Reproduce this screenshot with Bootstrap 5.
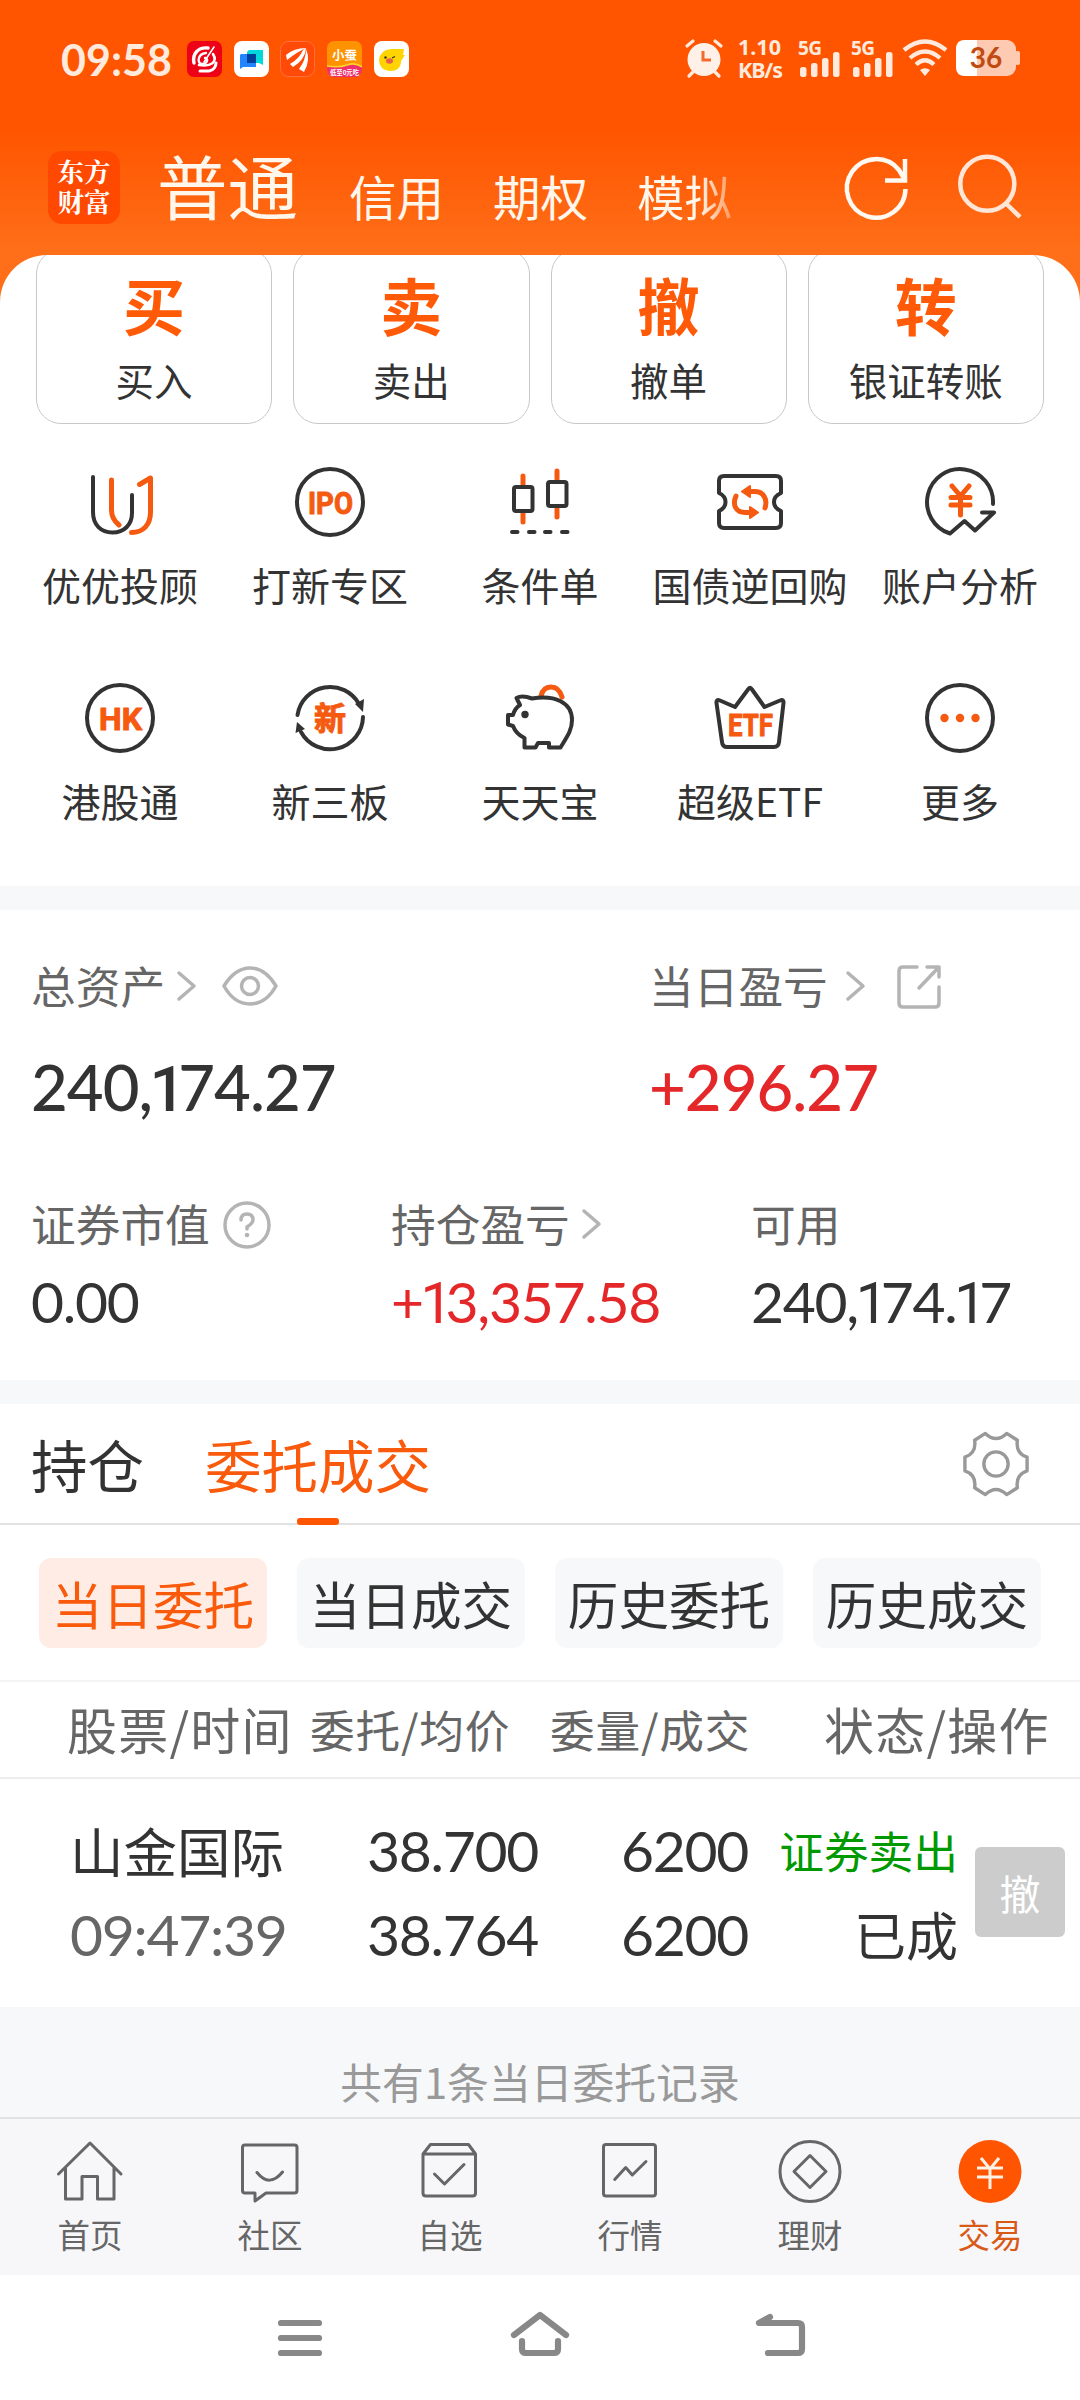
<!DOCTYPE html>
<html lang="zh-CN">
<head>
<meta charset="utf-8">
<meta name="viewport" content="width=device-width, initial-scale=1">
<title>东方财富 交易</title>
<link href="https://cdn.jsdelivr.net/npm/bootstrap@5.3.0/dist/css/bootstrap.min.css" rel="stylesheet">
<style>
body{font-family:"Noto Sans CJK SC",sans-serif;color:#333;background:#fff;width:1080px;height:2400px;overflow:hidden;line-height:1}
svg{display:block;flex:none;overflow:visible}
.num{font-family:Lato,sans-serif;white-space:nowrap}
.num i{font-family:Roboto,sans-serif;font-style:normal;margin:0 -.1em 0 -.04em}
.hero{height:302px;background:linear-gradient(#f50 0,#f50 130px,#ff6e18 250px)}
.statusbar{height:118px;padding:0 60px 0 61px}
.clock{font-size:43px;font-weight:700;color:#ffeadd;width:126px}
.appicons{gap:11.7px}
.speed{font-family:"Noto Sans",sans-serif;font-weight:700;font-size:21.5px;line-height:23px;color:#ffeadd}
.topnav{height:136px;color:#fff7ec;padding-left:48px}
.logo{width:72px;height:73px;border-radius:14px;background:#ff4800;color:#fff;font-weight:700;font-size:26.5px;line-height:30px;margin-top:33px;padding-top:5px;text-align:center;white-space:nowrap;font-family:"Noto Serif CJK SC","Noto Sans CJK SC",serif}
.acc{font-size:47.5px;line-height:60px;margin-top:48px;white-space:nowrap}
.acc-on{font-size:70.5px;line-height:80px;margin:26px 0 0 37px}
.fadeout{background:linear-gradient(90deg,#fff7ec 66%,rgba(255,247,236,.35));-webkit-background-clip:text;background-clip:text;color:transparent}
.sheet{margin-top:-47px;height:631px;border-radius:47px 47px 0 0;background:#fff;overflow:hidden}
.quick{padding:0 36px;gap:21px;margin-top:-6px}
.quick-card{height:175px;flex:1 1 0;border:1px solid #c8c8c8;border-radius:25px;text-align:center}
.quick-big{font-size:62px;line-height:62px;font-weight:700;color:#ff5a08;margin-top:23px}
.quick-label{font-size:38.5px;line-height:44px;margin-top:22px}
.services{padding:38px 15px 0}
.svc{width:210px;height:216px;text-align:center}
.svc-label{font-size:39px;line-height:46px;white-space:nowrap;margin-top:19px}
.band{height:24px;background:#f7f8fa}
.assets{height:470px;padding-left:31px}
.lab{font-size:44.7px;line-height:60px;color:#666;white-space:nowrap}
.big{font-size:63.5px;line-height:70px;letter-spacing:-1px;margin-top:37px}
.mid{font-size:57px;line-height:64px;letter-spacing:-1.3px;margin-top:16px}
.up{color:#e4282a}
.orange{color:#f95a0c}
.tabs{height:121px;border-bottom:2px solid #e2e2e2;padding:0 50px 0 31px}
.tab-t{font-size:56.5px;line-height:121px}
.tab-on{position:relative}
.tab-on::after{content:"";position:absolute;left:92px;bottom:-1px;width:42px;height:7px;border-radius:3px;background:#f50}
.pills{height:157px;padding:33px 39px 0;gap:30px;border-bottom:2px solid #f4f4f5}
.pill{flex:1 1 0;height:90px;border-radius:12px;background:#f7f8fa;font-size:50.6px;line-height:90px;text-align:center;white-space:nowrap}
.pill-on{background:#ffede5;color:#f95a0c}
.thead-row{height:97px;border-bottom:2px solid #ededed;color:#666;white-space:nowrap;line-height:93px;letter-spacing:.8px}
.thead-row .f50{letter-spacing:1.2px}
.f50{font-size:50px}.f45{font-size:44.7px}
.order{height:228px;padding-top:39px}
.order-line{line-height:64px;height:84px;white-space:nowrap}
.order .num{letter-spacing:-1.3px;font-size:57px}
.cancel{width:90px;height:90px;border-radius:6px;background:#ccc;color:#fff;font-size:41px;line-height:90px;text-align:center}
.foot{height:110px;background:#f7f8fa;color:#999;font-size:41.8px;line-height:148px;text-align:center}
.tabbar{height:158px;background:#f7f7fa;border-top:2px solid #e3e3e5;color:#666}
.tabbar>div{width:180px;padding-top:18px;text-align:center;font-size:32.5px;line-height:40px}
.tabbar svg{margin:0 auto 7px}
.ln{fill:none;stroke:#333;stroke-width:4;stroke-linecap:round;stroke-linejoin:round}
.og{fill:none;stroke:#f55a10;stroke-width:5;stroke-linecap:round;stroke-linejoin:round}
.gl{fill:none;stroke:#b4b4b4;stroke-width:3.5;stroke-linecap:round;stroke-linejoin:round}
.tl{fill:none;stroke:#666;stroke-width:3;stroke-linecap:round;stroke-linejoin:round}
.nl{fill:none;stroke:#888;stroke-width:6.2;stroke-linecap:round;stroke-linejoin:round}
.it{font-family:Roboto,sans-serif;font-weight:700;fill:#f55a10;stroke:#f55a10;stroke-width:1;stroke-linejoin:round}
</style>
<script src="https://cdn.jsdelivr.net/npm/bootstrap@5.3.0/dist/js/bootstrap.bundle.min.js"></script>
</head>
<body>
<header class="hero">
  <div class="statusbar d-flex align-items-center">
    <div class="clock num">09:58</div>
    <div class="appicons d-flex">
      <svg width="35" height="36" viewBox="0 0 35 36"><rect width="35" height="36" rx="7" fill="#ee0016"/><g fill="none" stroke="#fff" stroke-linecap="round"><path d="M21 7C11 6 5 13 7 22" stroke-width="3.4"/><path d="M27 6L17 21" stroke-width="1.6"/><path d="M19 12C10 13 10 23 15 23S22 18 18 17" stroke-width="2.4"/><path d="M26 13C31 21 24 26 12 24" stroke-width="2.6"/><path d="M13 30H22C27 29 29 25 29 22" stroke-width="3"/></g></svg>
      <svg width="35" height="36" viewBox="0 0 35 36"><rect width="35" height="36" rx="8" fill="#fff"/><path d="M15 9H29V24L25 22H13V11Z" fill="#00d8dc"/><path d="M7 13H22V26H9L6 28V14Z" fill="#2185ff"/><path d="M13 13H22V22H13Z" fill="#004099"/></svg>
      <svg width="35" height="36" viewBox="0 0 35 36"><rect x=".5" y=".5" width="34" height="35" rx="8" fill="#ff4a08" stroke="#ff713c"/><path d="M6 14Q14 7 26 7Q17 11 7 19ZM10 23Q19 18 23 9L26 7Q25 19 13 26ZM19 28Q26 19 26 8Q31 19 24 31Z" fill="#fff"/></svg>
      <svg width="35" height="36" viewBox="0 0 35 36"><defs><clipPath id="rc"><rect width="35" height="36" rx="7"/></clipPath></defs><g clip-path="url(#rc)"><rect width="35" height="36" fill="#ff9200"/><path d="M0 25Q12 27 20 24T35 26V36H0Z" fill="#f0306c"/><path d="M0 25Q12 27 20 24T35 26" fill="none" stroke="#ffd52a" stroke-width="1.5"/></g><text x="17.500" y="19" font-size="12.500" font-weight="700" text-anchor="middle" fill="#fff">小蚕</text><text x="17.500" y="34" font-size="6.300" font-weight="700" text-anchor="middle" fill="#fff">低至0元吃</text></svg>
      <svg width="35" height="36" viewBox="0 0 35 36"><rect width="35" height="36" rx="8" fill="#fff"/><path d="M17 8Q24 8 30 8L29 14L31 14L27 20Q27 30 16 30Q5 29 5 19Q6 9 17 8Z" fill="#ffd400"/><ellipse cx="15.500" cy="20" rx="3.500" ry="2.800" fill="#e8604c"/><circle cx="11.500" cy="16.500" r="1.200" fill="#333"/><path d="M18 17L21 15.500" stroke="#333" stroke-width="1.200"/></svg>
    </div>
    <div class="d-flex ms-auto align-items-center">
      <svg width="38" height="40" viewBox="1 1 38 40" fill="none" stroke="#ffeadd" stroke-linecap="round"><circle cx="19" cy="21.500" r="16.500" fill="#fff0e8" stroke="none"/><path d="M2 8L8 3M30 3L36 8" stroke-width="3.200"/><path d="M8 34L4 38M30 34L34 38" stroke-width="3.200"/><path d="M18 13V22H26" stroke="#f26a2e" stroke-width="3" stroke-linecap="butt"/></svg>
      <div class="speed" style="margin:-2px 0 0 14px;width:60px">1.10<br><span style="letter-spacing:-1.1px">KB/s</span></div>
      <svg width="97" height="40" viewBox="0 1 97 40" fill="#ffeadd" font-family="Noto Sans" font-weight="700" font-size="19"><text x="0" y="17" textLength="24">5G</text><rect x="2" y="29" width="6.500" height="10" rx="2.500"/><rect x="13" y="25" width="6.500" height="14" rx="2.500"/><rect x="24" y="20" width="6.500" height="19" rx="2.500"/><rect x="35" y="14" width="6.500" height="25" rx="2.500"/><text x="53" y="17" textLength="24">5G</text><rect x="55" y="29" width="6.500" height="10" rx="2.500"/><rect x="66" y="25" width="6.500" height="14" rx="2.500"/><rect x="77" y="20" width="6.500" height="19" rx="2.500"/><rect x="88" y="14" width="6.500" height="25" rx="2.500"/></svg>
      <svg width="46" height="40" viewBox="0 1 46 40" style="margin-left:7px" fill="none" stroke="#ffeadd" stroke-width="4.200"><path d="M2 12Q23-5 44 12"/><path d="M8 20Q23 7 38 20"/><path d="M14 26.500Q23 18 32 26.500"/><path d="M18 32Q23 28.500 28 32L23 38Z" fill="#ffeadd" stroke="none"/></svg>
      <svg width="64" height="36" viewBox="0 0 64 36" style="margin:-2px 0 0 8px"><rect width="60" height="36" rx="9" fill="#ffcab2"/><path d="M9 0H21V36H9Q0 36 0 27V9Q0 0 9 0Z" fill="#fff"/><rect x="59" y="11" width="5" height="14" rx="2" fill="#ffcab2"/><text x="30" y="28" font-family="Lato" font-size="28" font-weight="700" text-anchor="middle" fill="#c04a12">36</text></svg>
    </div>
  </div>
  <div class="topnav d-flex align-items-start">
    <div class="logo">东方<br>财富</div>
    <div class="acc acc-on">普通</div>
    <div class="acc" style="margin-left:51px">信用</div>
    <div class="acc" style="margin-left:49px">期权</div>
    <div class="acc fadeout" style="margin-left:49px">模拟</div>
    <svg width="70" height="70" viewBox="0 0 70 70" style="margin:35px 0 0 110px" fill="none" stroke="#fff9f2" stroke-width="4.500"><path d="M63.500 36A29.300 29.300 0 1 1 57 17L63 27M63 6V27.500H43"/></svg>
    <svg width="70" height="70" viewBox="0 0 70 70" style="margin:35px 0 0 41px" fill="none" stroke="#ffe6d6" stroke-width="4.500"><circle cx="34.300" cy="30.700" r="27"/><path d="M52.500 50L67 64"/></svg>
  </div>
</header>

<section class="sheet position-relative">
  <div class="quick d-flex">
    <div class="quick-card"><div class="quick-big">买</div><div class="quick-label">买入</div></div>
    <div class="quick-card"><div class="quick-big">卖</div><div class="quick-label">卖出</div></div>
    <div class="quick-card"><div class="quick-big">撤</div><div class="quick-label">撤单</div></div>
    <div class="quick-card"><div class="quick-big">转</div><div class="quick-label">银证转账</div></div>
  </div>
  <div class="services d-flex flex-wrap">
    <div class="svc"><svg class="mx-auto" width="80" height="80"><path class="ln" d="M13 15V50C13 63 21 70.500 32.500 70.500S52 63 52 51V33"/><path class="og" d="M31.500 18V48Q31.500 57 39 63M59.500 22.500L70.500 16V50C70.500 63 63 70.500 51.500 70.500"/></svg><div class="svc-label">优优投顾</div></div>
    <div class="svc"><svg class="mx-auto" width="80" height="80"><circle class="ln" cx="40" cy="40" r="33"/><text class="it" x="18" y="51.500" font-size="32" textLength="45" lengthAdjust="spacingAndGlyphs">IPO</text></svg><div class="svc-label">打新专区</div></div>
    <div class="svc"><svg class="mx-auto" width="80" height="80"><path class="og" d="M23 14V22M23 52V60M57 9V17M57 47V55"/><rect class="ln" x="14" y="25" width="18.500" height="24" rx="2"/><rect class="ln" x="48" y="20" width="18.500" height="24" rx="2"/><path class="ln" d="M12 70H17.500M29 70H34.500M45 70H50.500M62 70H67.500"/></svg><div class="svc-label">条件单</div></div>
    <div class="svc"><svg class="mx-auto" width="80" height="80"><path class="ln" d="M14 14H66Q71 14 71 19V31Q64 34 64 40T71 49V61Q71 66 66 66H14Q9 66 9 61V49Q15.500 46 15.500 40T9 31V19Q9 14 14 14Z"/><g class="og"><path d="M26 34C22 43 26 50.500 35 50.500H43M55 46C58 37 53 29.500 45 29.500H36"/><path d="M32 29.500L40 24V35ZM48 50.500L40 45V56Z" fill="#f55a10" stroke-width="2"/></g></svg><div class="svc-label">国债逆回购</div></div>
    <div class="svc"><svg class="mx-auto" width="80" height="80"><path class="ln" d="M73 42A33 33 0 1 0 30 71.500L44.500 59L55 68.500L74 50.500H62"/><path class="og" d="M32 24L40.500 34L49 24M31 35.500H50M31 43H50M40.500 34V53"/></svg><div class="svc-label">账户分析</div></div>
    <div class="svc"><svg class="mx-auto" width="80" height="80"><circle class="ln" cx="40" cy="40" r="33"/><text class="it" x="19" y="51.500" font-size="32" textLength="43" lengthAdjust="spacingAndGlyphs">HK</text></svg><div class="svc-label">港股通</div></div>
    <div class="svc"><svg class="mx-auto" width="80" height="80"><path class="ln" d="M7.500 37A33 33 0 0 1 69 26M73 39A33 33 0 0 1 11 54"/><path d="M65 26L74 21L73 34ZM5.500 55L7 44L15 51Z" fill="#333"/><text x="40" y="51.500" font-size="32" font-weight="700" text-anchor="middle" fill="#f55a10" stroke="#f55a10">新</text></svg><div class="svc-label">新三板</div></div>
    <div class="svc"><svg class="mx-auto" width="80" height="80"><path class="og" d="M41 18Q43 9 51 9T62 19"/><path class="ln" d="M16.500 20Q22 17 32 20.500C55 17 72 24 72 42C72 53 66 60 60.500 69.500H49V65H38L35.500 69.500H24.500V60Q16 56 13 48L8 46.500V37H13Q15 30 20 27Z"/><circle cx="25" cy="36.500" r="3.700" fill="#333"/></svg><div class="svc-label">天天宝</div></div>
    <div class="svc"><svg class="mx-auto" width="80" height="80"><path class="ln" d="M38 11.500Q40 8 42 11.500L54.500 29L70 22.500Q74 21 73.500 25L69 64Q68.500 69 64 69H17Q12.500 69 12 64L6.500 25Q6 21 10 22.500L25 29Z"/><text class="it" x="18" y="58" font-size="32" textLength="45" lengthAdjust="spacingAndGlyphs">ETF</text></svg><div class="svc-label">超级ETF</div></div>
    <div class="svc"><svg class="mx-auto" width="80" height="80"><circle class="ln" cx="40" cy="40" r="33"/><g fill="#f55a10"><circle cx="24.500" cy="40" r="4.200"/><circle cx="40" cy="40" r="4.200"/><circle cx="55.500" cy="40" r="4.200"/></g></svg><div class="svc-label">更多</div></div>
  </div>
</section>
<div class="band"></div>

<section class="assets">
  <div class="d-flex" style="padding-top:45px">
    <div style="width:618px">
      <div class="d-flex align-items-center"><span class="lab">总资产</span>
        <svg width="22" height="34" style="margin:2px 0 0 10px"><path class="gl" d="M4 4L19 17L4 30"/></svg>
        <svg width="58" height="44" style="margin:2px 0 0 24px"><path class="gl" d="M3 22Q14 4 29 4T55 22Q45 40 29 40T3 22Z"/><circle class="gl" cx="29" cy="22" r="8.500"/></svg></div>
      <div class="num big fw-medium">240,<i>1</i>74.27</div>
    </div>
    <div>
      <div class="d-flex align-items-center"><span class="lab">当日盈亏</span>
        <svg width="22" height="34" style="margin:2px 0 0 16px"><path class="gl" d="M4 4L19 17L4 30"/></svg>
        <svg width="48" height="48" style="margin:4px 0 0 29px"><path class="gl" d="M22 4H8Q4 4 4 8V40Q4 44 8 44H40Q44 44 44 40V24M32 4H44V14M44 4L24 25"/></svg></div>
      <div class="num big up fw-medium">+296.27</div>
    </div>
  </div>
  <div class="d-flex" style="padding-top:68px">
    <div style="width:360px">
      <div class="d-flex align-items-center"><span class="lab">证券市值</span>
        <svg width="50" height="50" style="margin:4px 0 0 12px"><circle class="gl" cx="25" cy="25" r="22"/><path class="gl" d="M19 20Q19 14 25 14T31 20Q31 23 25 27V29"/><circle cx="25" cy="35" r="2.300" fill="#b4b4b4"/></svg></div>
      <div class="num mid">0.00</div>
    </div>
    <div style="width:360px">
      <div class="d-flex align-items-center"><span class="lab">持仓盈亏</span>
        <svg width="22" height="34" style="margin:2px 0 0 10px"><path class="gl" d="M4 4L19 17L4 30"/></svg></div>
      <div class="num mid up">+<i>1</i>3,357.58</div>
    </div>
    <div>
      <div class="lab">可用</div>
      <div class="num mid">240,<i>1</i>74.<i>1</i>7</div>
    </div>
  </div>
</section>
<div class="band"></div>

<section>
  <div class="tabs d-flex align-items-center">
    <div class="tab-t">持仓</div>
    <div class="tab-t tab-on orange" style="margin-left:61px">委托成交</div>
    <svg class="ms-auto" width="68" height="68" viewBox="-1 -1 70 70" fill="none" stroke="#999" stroke-width="3.500" stroke-linejoin="round"><circle cx="34" cy="34" r="12.500"/><path d="M23 2.500Q34 13 45 2.500L56 9.500Q54 23 66 27V41Q54 45 56 58.500L45 65.500Q34 55 23 65.500L12 58.500Q14 45 2 41V27Q14 23 12 9.500Z"/></svg>
  </div>
  <div class="pills d-flex">
    <div class="pill pill-on">当日委托</div><div class="pill">当日成交</div><div class="pill">历史委托</div><div class="pill">历史成交</div>
  </div>
  <div class="thead-row d-flex">
    <div class="f50" style="padding-left:67px;width:310px">股票/时间</div>
    <div class="f45" style="width:240px">委托/均价</div>
    <div class="f45" style="width:274px">委量/成交</div>
    <div class="f50">状态/操作</div>
  </div>
  <div class="order d-flex">
    <div style="width:300px;padding-left:70px">
      <div class="order-line" style="font-size:53.500px">山金国际</div>
      <div class="order-line num" style="color:#666">09:47:39</div>
    </div>
    <div class="text-end num" style="width:238px"><div class="order-line">38.700</div><div class="order-line">38.764</div></div>
    <div class="text-end num" style="width:210px"><div class="order-line">6200</div><div class="order-line">6200</div></div>
    <div class="text-end" style="width:210px"><div class="order-line f45" style="color:#090">证券卖出</div><div class="order-line" style="font-size:52px">已成</div></div>
    <div class="cancel" style="margin:29px 0 0 17px">撤</div>
  </div>
  <div class="foot">共有1条当日委托记录</div>
</section>

<nav class="tabbar d-flex">
  <div><svg width="70" height="70"><path class="tl" d="M3.500 37L35 6L66 37M10.500 31V62H27V39.500H42.500V62H59V31"/></svg>首页</div>
  <div><svg width="70" height="70"><path class="tl" d="M10 8H59.500Q62 8 62 10.500V53.500Q62 56 59.500 56H31L20 64V56H10Q7.500 56 7.500 53.500V10.500Q7.500 8 10 8ZM22 35.500Q34.500 51 47.500 35"/></svg>社区</div>
  <div><svg width="70" height="70"><path class="tl" d="M8 17L15.500 7.500H53.500L60.500 17M8 17H60.500V56Q60.500 59 57.500 59H11Q8 59 8 56ZM19.500 37L29.500 47L49 27.500"/></svg>自选</div>
  <div><svg width="70" height="70"><path class="tl" d="M11 7.500H58Q60.500 7.500 60.500 10V56.500Q60.500 59 58 59H11Q8.500 59 8.500 56.500V10Q8.500 7.500 11 7.500ZM19.700 42.500L30.700 30.500L37.300 38L51 24.500"/></svg>行情</div>
  <div><svg width="70" height="70"><circle class="tl" cx="35" cy="34.500" r="30"/><path class="tl" d="M35 18.500L51 34.500L35 50.500L19 34.500Z"/></svg>理财</div>
  <div style="color:#d95a16"><svg width="70" height="70"><circle cx="35" cy="34.500" r="31.500" fill="#f50"/><path d="M26 21L35 32L44 21M22 31H48M22 40H48M35 31V52" fill="none" stroke="#fff2e4" stroke-width="3"/></svg>交易</div>
</nav>
<div class="d-flex justify-content-center" style="gap:180px;padding-top:33px">
  <svg width="60" height="60"><path class="nl" d="M11 15H49M11 30H49M11 45H49"/></svg>
  <svg width="60" height="60"><path class="nl" d="M4 27L30 7L56 27M12 33V41Q12 45 16 45H44Q48 45 48 41V33"/></svg>
  <svg width="60" height="60"><path class="nl" d="M20 9L9 15H48Q52 15 52 19V41Q52 45 48 45H18"/></svg>
</div>
</body>
</html>
